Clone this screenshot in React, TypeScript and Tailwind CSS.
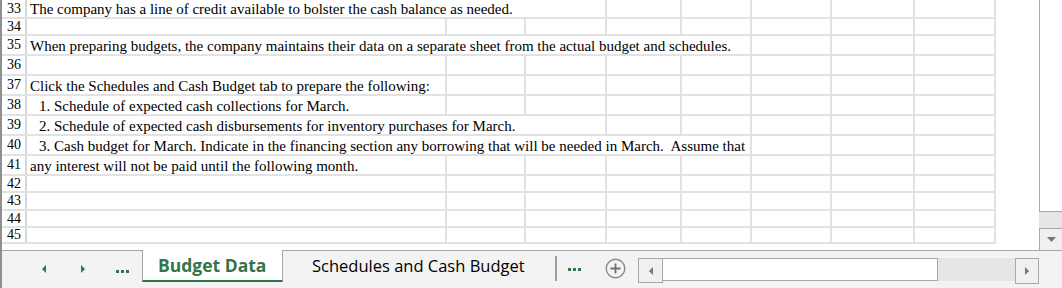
import React from 'react';

interface Row {
  n: number;
  h: number;
  text?: string;
  indent?: boolean;
  hide?: number;
}

const rows: Row[] = [
  { n: 33, h: 19, text: 'The company has a line of credit available to bolster the cash balance as needed.', hide: 2 },
  { n: 34, h: 17 },
  { n: 35, h: 20, text: 'When preparing budgets, the company maintains their data on a separate sheet from the actual budget and schedules.', hide: 4 },
  { n: 36, h: 20 },
  { n: 37, h: 20, text: 'Click the Schedules and Cash Budget tab to prepare the following:' },
  { n: 38, h: 20, text: '1. Schedule of expected cash collections for March.', indent: true },
  { n: 39, h: 20, text: '2. Schedule of expected cash disbursements for inventory purchases for March.', indent: true, hide: 2 },
  { n: 40, h: 20, text: '3. Cash budget for March. Indicate in the financing section any borrowing that will be needed in March.  Assume that', indent: true, hide: 4 },
  { n: 41, h: 20, text: 'any interest will not be paid until the following month.' },
  { n: 42, h: 17 },
  { n: 43, h: 18 },
  { n: 44, h: 17 },
  { n: 45, h: 16 },
];

// column widths incl. the right gridline
const cols = [420, 79, 81, 75, 70, 80, 83, 81];

function GridRow({ row }: { row: Row }) {
  const hide = row.hide || 0;
  return (
    <div className="flex" style={{ height: row.h }}>
      <div className="flex border-b-2 border-[#e2e2e2]">
        <div className="w-[25px] shrink-0 border-r-2 border-[#d6d6d6] flex items-center justify-center pl-[1px] text-[14px] leading-none text-black [font-family:'Liberation_Serif',serif]">
          {row.n}
        </div>
        {cols.map((w, i) => (
          <div
            key={i}
            style={{ width: w }}
            className={
              'shrink-0 border-r-2 ' + (i < hide ? 'border-transparent' : 'border-[#e2e2e2]')
            }
          >
            {i === 0 && row.text && (
              <div
                className={
                  "h-full flex items-center pt-[2px] whitespace-pre text-[15px] leading-none text-black [font-family:'Liberation_Serif',serif] " +
                  (row.indent ? 'pl-[12px]' : 'pl-[3px]')
                }
              >
                {row.text}
              </div>
            )}
          </div>
        ))}
      </div>
      <div className="flex-1" />
    </div>
  );
}

function Tri({ dir, color }: { dir: 'left' | 'right' | 'down'; color: string }) {
  if (dir === 'down') {
    return (
      <svg width="9" height="5" viewBox="0 0 9 5">
        <path d="M0 0 L9 0 L4.5 5 Z" fill={color} />
      </svg>
    );
  }
  return (
    <svg width="4" height="8" viewBox="0 0 4 8">
      <path d={dir === 'left' ? 'M4 0 L4 8 L0 4 Z' : 'M0 0 L0 8 L4 4 Z'} fill={color} />
    </svg>
  );
}

export default function App() {
  return (
    <div className="w-[1062px] h-[288px] bg-white border-l-2 border-[#8f8f8f] flex flex-col overflow-hidden">
      <div className="flex h-[250px]">
        <div className="flex-1 flex flex-col">
          {rows.map((r) => (
            <GridRow key={r.n} row={r} />
          ))}
        </div>
        <div className="w-[23px] flex flex-col">
          <div className="h-[212px] bg-white border-l border-b border-[#a8a8a8]" />
          <div className="h-[16px] bg-[#e6e6e6]" />
          <div className="h-[22px] bg-[#f0f0f0] border-l border-t border-[#a8a8a8] flex items-center justify-center">
            <Tri dir="down" color="#777" />
          </div>
        </div>
      </div>

      <div className="h-[38px] bg-[#f3f3f3] flex [font-family:'Open_Sans',sans-serif]">
        <div className="w-[140px] border-t border-[#a6a6a6] flex items-center h-full pb-[2px]">
          <div className="ml-[40px] flex items-center">
            <Tri dir="left" color="#33744a" />
          </div>
          <div className="ml-[35px] flex items-center">
            <Tri dir="right" color="#33744a" />
          </div>
          <div className="ml-[31px] flex gap-[2px] items-end pt-[6px]">
            <span className="w-[3px] h-[3px] bg-[#33744a]" />
            <span className="w-[3px] h-[3px] bg-[#33744a]" />
            <span className="w-[3px] h-[3px] bg-[#33744a]" />
          </div>
        </div>
        <div className="w-[141px] h-[32px] bg-white border-x border-[#a6a6a6] border-b-2 border-b-[#33744a] flex items-center pl-[15px] text-[17.5px] font-bold text-[#33744a]">
          Budget Data
        </div>
        <div className="flex-1 border-t border-[#a6a6a6] flex items-start">
          <div className="w-[272px] h-[31px] flex items-center pl-[29px] text-[16.5px] text-black">
            Schedules and Cash Budget
          </div>
          <div className="w-[2px] h-[25px] mt-[5px] bg-[#a0a0a0]" />
          <div className="ml-[11px] h-[31px] flex gap-[2px] items-center pt-[6px]">
            <span className="w-[3px] h-[3px] bg-[#33744a]" />
            <span className="w-[3px] h-[3px] bg-[#33744a]" />
            <span className="w-[3px] h-[3px] bg-[#33744a]" />
          </div>
          <div className="ml-[24px] h-[35px] flex items-center">
            <svg width="21" height="21" viewBox="0 0 21 21">
              <circle cx="10.5" cy="10.5" r="9.3" fill="none" stroke="#8a8a8a" strokeWidth="1.4" />
              <path d="M10.5 5.5 V15.5 M5.5 10.5 H15.5" stroke="#6f6f6f" strokeWidth="1.8" />
            </svg>
          </div>
          <div className="ml-[12px] mt-[7px] flex">
            <div className="w-[25px] h-[25px] bg-[#f0f0f0] border border-[#a8a8a8] flex items-center justify-center">
              <Tri dir="left" color="#777" />
            </div>
            <div className="w-[275px] h-[23px] bg-white border border-l-0 border-[#a8a8a8]" />
            <div className="w-[77px] h-[23px] bg-[#e6e6e6]" />
            <div className="w-[24px] h-[26px] bg-[#f0f0f0] border border-[#a8a8a8] flex items-center justify-center">
              <Tri dir="right" color="#777" />
            </div>
          </div>
        </div>
      </div>
    </div>
  );
}
